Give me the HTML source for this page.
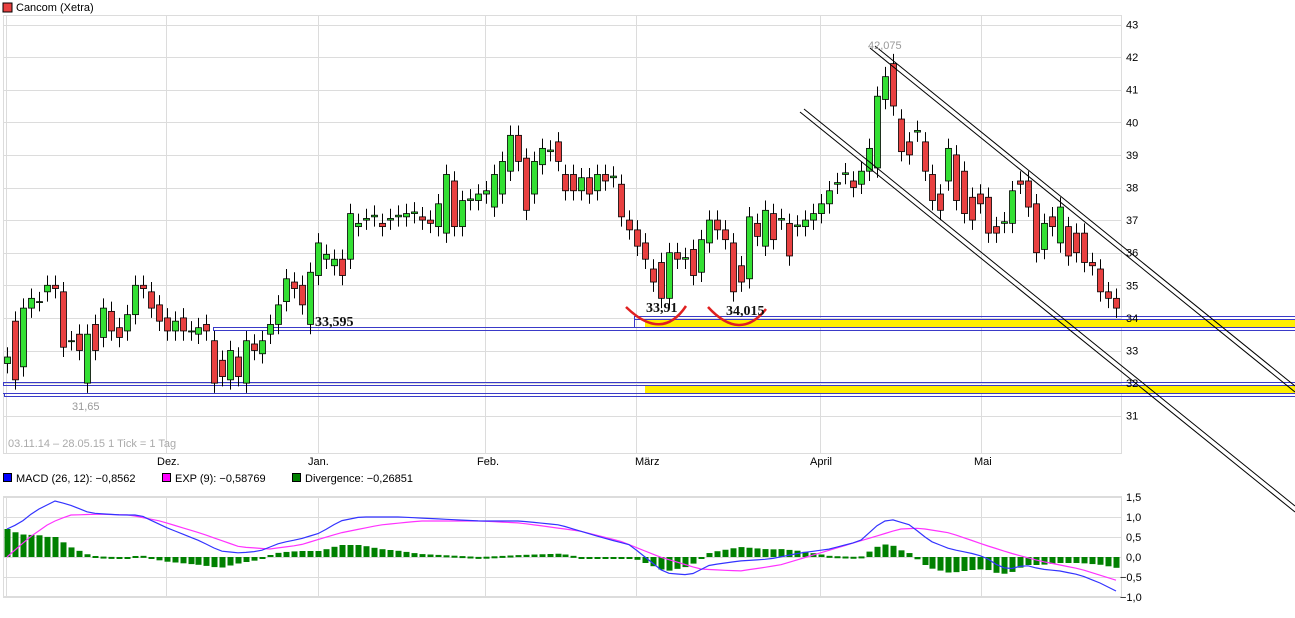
<!DOCTYPE html>
<html><head><meta charset="utf-8"><style>
body{margin:0;background:#fff;width:1295px;height:618px;overflow:hidden}
svg{display:block;font-family:"Liberation Sans",sans-serif}
</style></head><body>
<svg id="s" width="1295" height="618" xmlns="http://www.w3.org/2000/svg">
<rect x="3" y="3" width="9" height="9" fill="#e84040" stroke="#000" stroke-width="1"/>
<text x="16" y="11" font-size="11">Cancom (Xetra)</text>
<g id="grid" stroke="#dcdcdc" stroke-width="1" fill="none"></g>
<rect x="3.5" y="15.5" width="1118" height="438" fill="none" stroke="#dcdcdc"/>
<rect x="3.5" y="496.5" width="1118" height="100" fill="none" stroke="#dcdcdc"/>
<g fill="none" stroke="#3a3ac8" stroke-width="1">
<rect x="634.5" y="316.5" width="700" height="11"/>
<rect x="213.5" y="327.5" width="1100" height="3"/>
<rect x="3.5" y="382.5" width="1300" height="3"/>
<rect x="4.5" y="393.5" width="1300" height="3"/>
</g>
<rect x="645" y="319.5" width="650" height="8" fill="#ffef00"/>
<rect x="645" y="386" width="650" height="7" fill="#ffef00"/>
<g fill="none" stroke="#3a3ac8" stroke-width="1">
<line x1="634" y1="319.5" x2="1295" y2="319.5"/><line x1="634" y1="327.5" x2="1295" y2="327.5"/>
<line x1="3" y1="385.5" x2="1295" y2="385.5"/><line x1="3" y1="393.5" x2="1295" y2="393.5"/>
</g>
<g id="candles"></g>
<g stroke="#000" stroke-width="1" fill="none">
<line x1="870" y1="48" x2="1295" y2="392"/><line x1="875" y1="46" x2="1295" y2="386"/>
<line x1="800" y1="112" x2="1295" y2="512"/><line x1="804" y1="109" x2="1295" y2="506"/>
</g>
<g stroke="#e02020" stroke-width="2.5" fill="none">
<path d="M626 307 Q662 342 686 306"/>
<path d="M708 307 Q740 342 766 309"/>
</g>
<g font-family="Liberation Serif,serif" font-weight="bold" font-size="14" fill="#111">
<text x="646" y="312">33,91</text><text x="726" y="315">34,015</text><text x="315" y="326">33,595</text>
</g>
<text x="72" y="410" font-size="11" fill="#999">31,65</text>
<text x="868" y="49" font-size="11" fill="#999">42,075</text>
<text x="8" y="447" font-size="11" fill="#aaa">03.11.14 – 28.05.15   1 Tick = 1 Tag</text>
<g font-size="11" fill="#000">
<text x="157" y="465">Dez.</text><text x="308" y="465">Jan.</text><text x="477" y="465">Feb.</text>
<text x="635" y="465">März</text><text x="810" y="465">April</text><text x="974" y="465">Mai</text>
</g>
<g id="yax" font-size="11" fill="#000"></g>
<rect x="3.5" y="473.5" width="8" height="8" fill="#0000ff" stroke="#000"/>
<text x="16" y="482" font-size="11">MACD (26, 12): −0,8562</text>
<rect x="162.5" y="473.5" width="8" height="8" fill="#ff00ff" stroke="#000"/>
<text x="175" y="482" font-size="11">EXP (9): −0,58769</text>
<rect x="292.5" y="473.5" width="8" height="8" fill="#008000" stroke="#000"/>
<text x="305" y="482" font-size="11">Divergence: −0,26851</text>
<g id="macd"></g>
</svg>
<script>
var NS="http://www.w3.org/2000/svg";
function el(p,t,a){var e=document.createElementNS(NS,t);for(var k in a)e.setAttribute(k,a[k]);p.appendChild(e);return e;}
var g=document.getElementById('grid');
function py(p){return 24.5+(43-p)*32.6;}
for(var p=31;p<=43;p++){var y=Math.round(py(p))+0.5;el(g,'line',{x1:3,y1:y,x2:1121,y2:y});}
[6.5,166.5,318.5,485.5,636.5,820.5,981.5].forEach(function(x){el(g,'line',{x1:x,y1:15,x2:x,y2:453});el(g,'line',{x1:x,y1:496,x2:x,y2:596});});
for(var i=0;i<6;i++){var y=497+i*20+0.5;el(g,'line',{x1:3,y1:y,x2:1121,y2:y});}
var ya=document.getElementById('yax');
for(var p=31;p<=43;p++){var t=el(ya,'text',{x:1126,y:py(p)+4});t.textContent=p;}
['1,5','1,0','0,5','0,0','−0,5','−1,0'].forEach(function(s,i){var t=el(ya,'text',{x:i>3?1120:1126,y:501+i*20});t.textContent=s;});
var d=[[32.6,32.8],[33.9,32.1],[32.5,34.3],[34.3,34.6],[34.5,34.5],[34.8,35.0],[35.0,34.9],[34.8,33.1],[33.3,33.3],[33.5,33.0],[32.0,33.5],[33.8,33.0],[33.4,34.3],[34.2,33.6],[33.7,33.4],[33.6,34.1],[34.1,35.0],[35.0,34.9],[34.8,34.3],[34.4,33.9],[34.0,33.6],[33.6,33.9],[34.0,33.6],[33.6,33.6],[33.5,33.7],[33.8,33.6],[33.3,32.0],[32.7,32.2],[32.1,33.0],[32.8,32.2],[32.0,33.3],[33.2,33.0],[32.9,33.3],[33.5,33.8],[33.8,34.4],[34.5,35.2],[35.1,34.9],[35.0,34.4],[33.8,35.4],[35.3,36.3],[35.8,35.95],[35.6,35.8],[35.8,35.3],[35.8,37.2],[36.8,36.9],[37.0,37.05],[37.1,37.15],[36.9,36.8],[37.0,37.05],[37.1,37.15],[37.1,37.2],[37.2,37.25],[37.1,37.0],[37.0,36.9],[36.8,37.5],[36.6,38.4],[38.2,36.8],[36.8,37.6],[37.6,37.65],[37.6,37.8],[37.8,37.9],[37.4,38.4],[37.8,38.8],[38.5,39.6],[39.6,38.8],[38.9,37.3],[37.8,38.8],[38.7,39.2],[39.1,39.15],[39.4,38.8],[38.4,37.9],[38.4,37.9],[37.9,38.3],[38.3,37.8],[37.9,38.4],[38.4,38.2],[38.3,38.35],[38.1,37.1],[37.0,36.7],[36.7,36.2],[36.3,35.8],[35.5,35.1],[35.7,34.6],[34.6,36.0],[36.0,35.8],[35.8,35.85],[36.1,35.3],[35.4,36.4],[36.3,37.0],[37.0,36.7],[36.7,36.4],[36.3,34.8],[35.6,35.1],[35.2,37.1],[36.9,36.5],[36.2,37.3],[37.2,36.4],[37.0,37.05],[36.9,35.9],[36.8,36.85],[36.8,37.0],[37.0,37.2],[37.2,37.5],[37.5,37.9],[38.1,38.15],[38.4,38.45],[38.2,38.0],[38.1,38.5],[38.5,39.2],[38.6,40.8],[40.7,41.4],[41.8,40.5],[40.1,39.1],[39.4,39.0],[39.7,39.75],[39.4,38.5],[38.4,37.6],[37.8,37.3],[38.2,39.2],[39.0,37.6],[38.5,37.2],[37.7,37.0],[37.8,37.5],[37.7,36.6],[36.8,36.6],[36.9,36.95],[36.9,37.9],[38.2,38.1],[38.2,37.4],[37.5,36.0],[36.1,36.9],[37.1,36.8],[36.3,37.4],[36.8,35.9],[36.6,36.0],[36.6,35.7],[35.7,35.6],[35.5,34.8],[34.8,34.6],[34.6,34.3]];
var c=document.getElementById('candles');var n=d.length;var dx=(1116-7)/(n-1);
d.forEach(function(v,i){var x=Math.round(7+i*dx);var o=v[0],cl=v[1];var hi=Math.max(o,cl)+0.3,lo=Math.min(o,cl)-0.3;
el(c,'line',{x1:x+0.5,y1:py(hi),x2:x+0.5,y2:py(lo),stroke:'#000'});
var t=Math.min(py(o),py(cl)),h=Math.max(Math.abs(py(o)-py(cl)),1);
el(c,'rect',{x:x-2.5,y:t,width:6,height:h,fill:cl>=o?'#33e033':'#e84040',stroke:'#000','stroke-width':0.8});});
var M=[[7,0.7],[20,0.85],[35,1.15],[55,1.4],[70,1.3],[90,1.1],[120,1.05],[140,1.05],[165,0.75],[180,0.6],[200,0.4],[220,0.15],[240,0.1],[260,0.15],[280,0.35],[300,0.45],[320,0.6],[340,0.9],[360,1.0],[400,1.0],[440,0.95],[480,0.9],[520,0.9],[560,0.8],[600,0.5],[630,0.3],[650,-0.1],[665,-0.4],[690,-0.45],[710,-0.2],[740,-0.1],[770,-0.05],[800,0.1],[830,0.2],[860,0.4],[880,0.85],[890,0.95],[910,0.8],[930,0.4],[950,0.2],[970,0.1],[985,0],[1000,-0.25],[1010,-0.3],[1025,-0.2],[1040,-0.3],[1060,-0.35],[1080,-0.45],[1100,-0.65],[1116,-0.85]];
var S=[[7,0],[30,0.5],[50,0.85],[70,1.05],[100,1.07],[130,1.05],[160,0.9],[200,0.6],[240,0.25],[270,0.2],[300,0.3],[340,0.6],[380,0.8],[420,0.9],[480,0.9],[520,0.85],[580,0.65],[620,0.4],[660,0.0],[700,-0.3],[740,-0.35],[780,-0.2],[820,0.1],[860,0.4],[900,0.7],[920,0.72],[950,0.6],[985,0.3],[1010,0.1],[1040,-0.1],[1080,-0.3],[1116,-0.58]];
function interp(A,x){for(var i=1;i<A.length;i++){if(x<=A[i][0]){var a=A[i-1],b=A[i];return a[1]+(b[1]-a[1])*(x-a[0])/(b[0]-a[0]);}}return A[A.length-1][1];}
var m=document.getElementById('macd');function my(v){return 557-v*40;}
var pm=[],ps=[];
for(var i=0;i<n;i++){var x=Math.round(7+i*dx);var mm=interp(M,x),ss=interp(S,x);pm.push(x+','+my(mm).toFixed(1));ps.push(x+','+my(ss).toFixed(1));
var y1=my(mm-ss);el(m,'rect',{x:x-2.5,y:Math.min(557,y1),width:6,height:Math.max(Math.abs(y1-557),2),fill:'#008000'});}
el(m,'polyline',{points:ps.join(' '),fill:'none',stroke:'#ff33ff','stroke-width':1.2});
el(m,'polyline',{points:pm.join(' '),fill:'none',stroke:'#3333ff','stroke-width':1.2});
</script>
</body></html>
